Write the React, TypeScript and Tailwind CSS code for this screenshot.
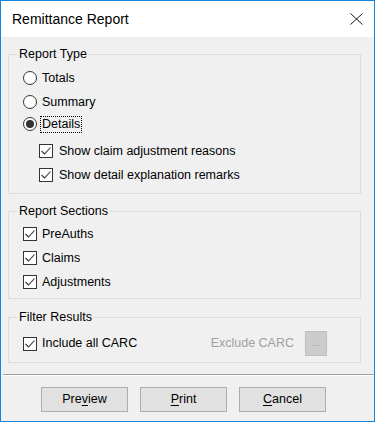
import type { ReactNode } from "react";

function Radio({ checked }: { checked?: boolean }) {
  return (
    <span className="flex h-[14px] w-[14px] shrink-0 items-center justify-center rounded-full border border-[#333333] bg-white">
      {checked && <span className="h-[8px] w-[8px] rounded-full bg-[#333333]" />}
    </span>
  );
}

function Check() {
  return (
    <span className="flex h-[14px] w-[14px] shrink-0 items-center justify-center border border-[#333333] bg-white">
      <svg width="12" height="12" viewBox="0 0 12 12" fill="none">
        <path d="M1.5 6 L4.5 9 L10.5 2.5" stroke="#333333" strokeWidth="1.1" />
      </svg>
    </span>
  );
}

function Group({ title, children, className }: { title: string; children: ReactNode; className?: string }) {
  return (
    <fieldset className={"border border-[#dcdcdc] " + (className ?? "")}>
      <legend className="ml-[8px] px-[2px] leading-[15px]">{title}</legend>
      {children}
    </fieldset>
  );
}

function Btn({ children }: { children: ReactNode }) {
  return (
    <button className="flex h-[25px] w-[87px] items-center justify-center border border-[#adadad] bg-[#e1e1e1] text-[12.5px] text-black">
      {children}
    </button>
  );
}

export default function App() {
  return (
    <div
      className="flex h-[422px] w-[375px] flex-col border border-[#1883d7] bg-[#f0f0f0] text-[12.5px] text-black"
      style={{ fontFamily: '"Liberation Sans", Arial, sans-serif' }}
    >
      {/* title bar */}
      <div className="flex h-[36px] shrink-0 items-center justify-between bg-white pl-[11px] pr-[11px]">
        <span className="text-[14px]">Remittance Report</span>
        <svg width="13" height="12" viewBox="0 0 13 12" fill="none">
          <path d="M0.5 0.5 L12.5 11.5 M12.5 0.5 L0.5 11.5" stroke="#1a1a1a" strokeWidth="1" />
        </svg>
      </div>

      <div className="flex flex-col pl-[7px] pr-[13px]">
        <Group title="Report Type" className="mt-[10px] pb-[6px] pt-[4px]">
          <div className="flex flex-col pl-[14px]">
            <div className="flex h-[24px] items-center gap-[5px]">
              <Radio />
              <span>Totals</span>
            </div>
            <div className="flex h-[24px] items-center gap-[5px]">
              <Radio />
              <span>Summary</span>
            </div>
            <div className="flex h-[20px] items-center gap-[3px]">
              <Radio checked />
              <span className="border border-dotted border-black px-[1px] leading-[15px]">Details</span>
            </div>
            <div className="mt-[5px] flex h-[24px] items-center gap-[6px] pl-[16px]">
              <Check />
              <span>Show claim adjustment reasons</span>
            </div>
            <div className="flex h-[24px] items-center gap-[6px] pl-[16px]">
              <Check />
              <span>Show detail explanation remarks</span>
            </div>
          </div>
        </Group>

        <Group title="Report Sections" className="mt-[10px] pb-[4px] pt-[3px]">
          <div className="flex flex-col pl-[14px]">
            {["PreAuths", "Claims", "Adjustments"].map((s) => (
              <div key={s} className="flex h-[24px] items-center gap-[5px]">
                <Check />
                <span>{s}</span>
              </div>
            ))}
          </div>
        </Group>

        <Group title="Filter Results" className="mt-[11px] pb-[6px] pt-[6px]">
          <div className="flex h-[25px] items-center pl-[14px] pr-[33px]">
            <div className="flex items-center gap-[5px]">
              <Check />
              <span>Include all CARC</span>
            </div>
            <div className="ml-auto flex items-center gap-[11px]">
              <span className="text-[#a0a0a0]">Exclude CARC</span>
              <span className="flex h-[25px] w-[22px] items-center justify-center border border-[#bfbfbf] bg-[#cccccc] pb-[3px] text-[10px] text-[#9a9a9a]">
                ...
              </span>
            </div>
          </div>
        </Group>
      </div>

      {/* separator */}
      <div className="ml-[2px] mt-[11px] border-b border-t border-b-white border-t-[#a0a0a0]" />

      <div className="mt-[11px] flex gap-[12px] pl-[40px]">
        <Btn>
          Pre<span className="underline underline-offset-2">v</span>iew
        </Btn>
        <Btn>
          <span className="underline underline-offset-2">P</span>rint
        </Btn>
        <Btn>
          <span className="underline underline-offset-2">C</span>ancel
        </Btn>
      </div>
    </div>
  );
}
